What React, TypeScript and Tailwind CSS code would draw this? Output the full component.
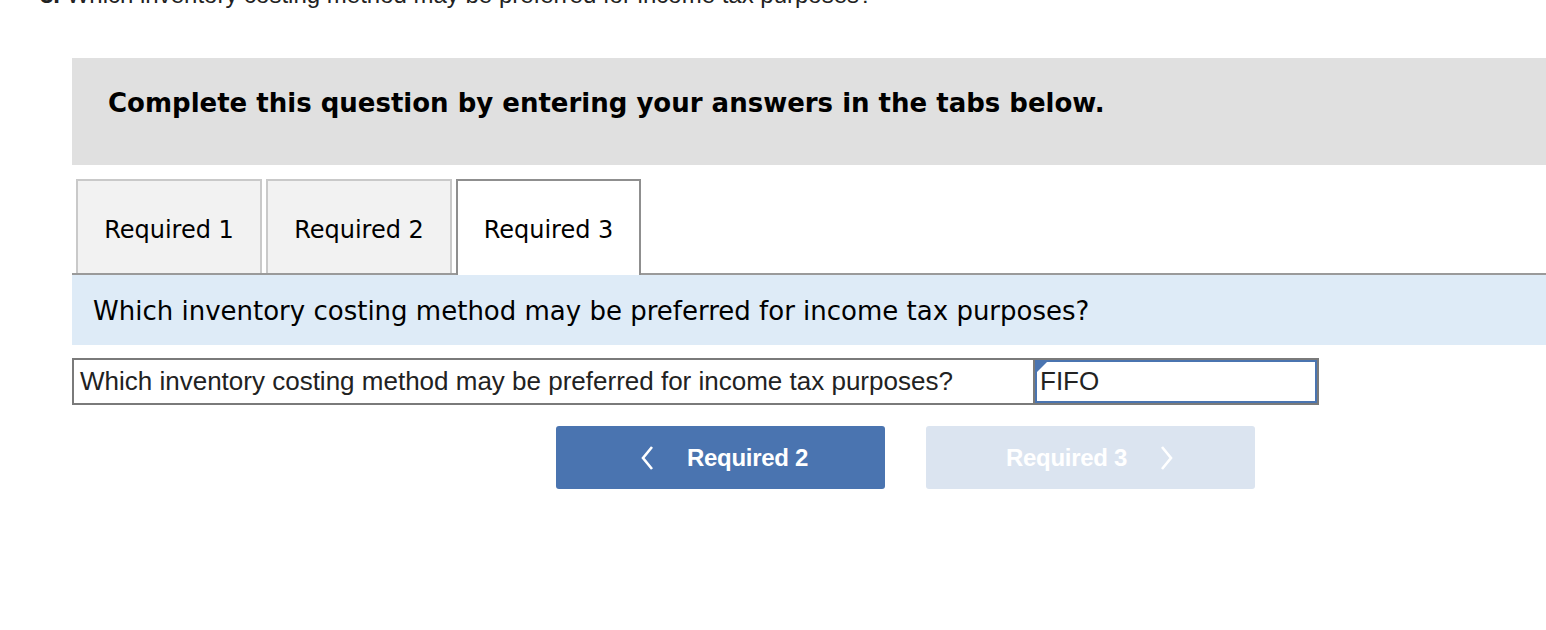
import React from 'react';

const verdana = { fontFamily: '"DejaVu Sans", Verdana, sans-serif' };
const arial = { fontFamily: '"Liberation Sans", Arial, sans-serif' };

function Tab({ label, active }: { label: string; active?: boolean }) {
  if (active) {
    return (
      <div className="relative -mb-[2px] flex h-[96px] w-[185px] items-center justify-center border-2 border-b-0 border-[#8f8f8f] bg-white pt-[3px] text-[24px] text-black">
        {label}
      </div>
    );
  }
  return (
    <div className="flex h-[94px] w-[186px] items-center justify-center border-2 border-b-0 border-[#c9c9c9] bg-[#f2f2f2] pt-[5px] text-[24px] text-black">
      {label}
    </div>
  );
}

export default function App() {
  return (
    <div className="h-[630px] overflow-hidden bg-white">
      <div className="-mt-[20px] pl-[40px] text-[24px] leading-[30px] text-[#222]" style={arial}>
        <span className="font-bold">3.</span> Which inventory costing method may be preferred for income tax purposes?
      </div>

      <div className="mt-[48px] pl-[72px]">
        {/* instructions banner */}
        <div className="h-[107px] bg-[#e0e0e0] pl-[36px] pt-[29px]" style={verdana}>
          <h2 className="text-[26px] leading-[32px] font-bold text-black">Complete this question by entering your answers in the tabs below.</h2>
        </div>

        {/* tabs */}
        <div className="mt-[14px] flex items-end gap-[4px] border-b-2 border-[#9a9a9a] pl-[4px]" style={verdana}>
          <Tab label="Required 1" />
          <Tab label="Required 2" />
          <Tab label="Required 3" active />
        </div>

        <div className="flex h-[70px] items-center bg-[#deebf7] pl-[21px] pt-[3px] text-[26px] text-black" style={verdana}>
          Which inventory costing method may be preferred for income tax purposes?
        </div>

        {/* answer row */}
        <div className="mt-[13px] flex h-[47px] w-[1247px] text-[26px] text-[#222]" style={arial}>
          <div className="flex flex-1 items-center border-2 border-r-0 border-[#7a7a7a] pl-[6px]">
            Which inventory costing method may be preferred for income tax purposes?
          </div>
          <div className="relative w-[286px] border-2 border-[#7a7a7a]">
            <div className="flex h-full items-center border-2 border-[#4a74b0] pl-[3px]">FIFO</div>
            <div className="absolute left-[2px] top-[2px] h-0 w-0 border-l-[10px] border-t-[10px] border-l-transparent border-t-[#4a74b0] -scale-x-100" />
          </div>
        </div>

        {/* nav buttons */}
        <div className="mt-[21px] flex gap-[41px] pl-[484px]" style={arial}>
          <button className="flex h-[63px] w-[329px] items-center justify-center rounded-[3px] bg-[#4a74b0] pl-[6px] text-[24px] font-bold tracking-[-0.3px] text-white">
            <svg width="16" height="26" viewBox="0 0 16 26" className="mr-[32px]">
              <path d="M13 2 L4 13 L13 24" fill="none" stroke="white" strokeWidth="2.6" />
            </svg>
            Required 2
          </button>
          <button className="flex h-[63px] w-[329px] items-center justify-center rounded-[3px] bg-[#dbe4f0] text-[24px] font-bold tracking-[-0.3px] text-white">
            Required 3
            <svg width="16" height="26" viewBox="0 0 16 26" className="ml-[32px]">
              <path d="M3 2 L12 13 L3 24" fill="none" stroke="white" strokeWidth="2.6" />
            </svg>
          </button>
        </div>
      </div>
    </div>
  );
}
